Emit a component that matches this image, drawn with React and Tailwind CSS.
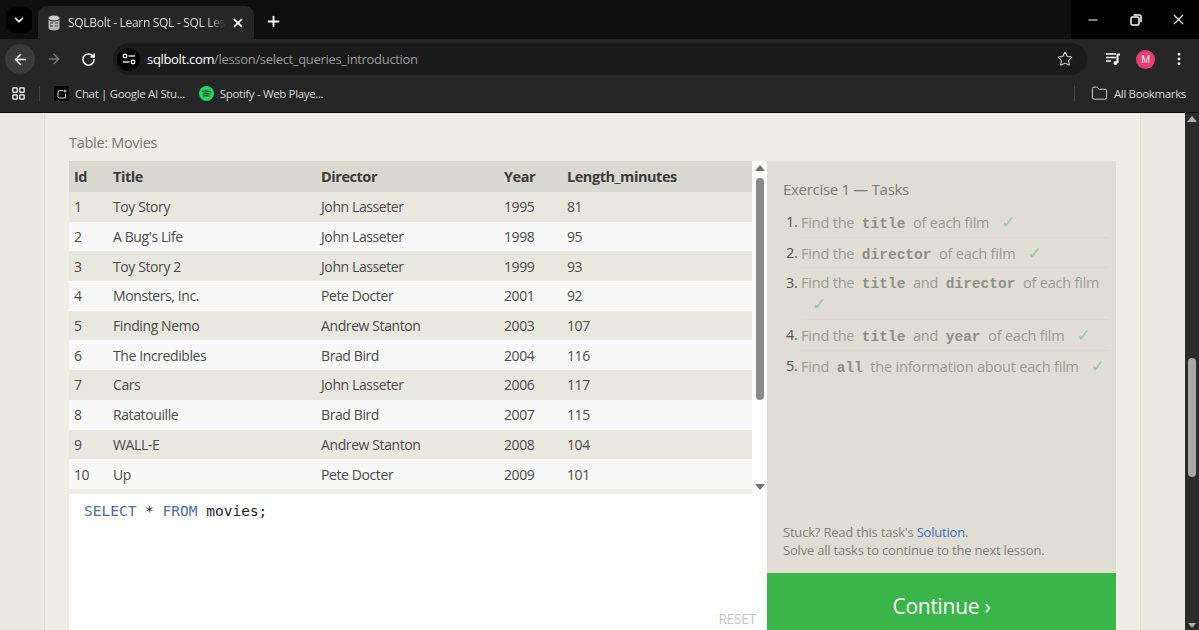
import React from "react";
import { ChevronDown, X, Plus, ArrowLeft, ArrowRight, RotateCw, Star, MoreVertical, Minus, Folder, LayoutGrid } from "lucide-react";

const rows = [
  ["1", "Toy Story", "John Lasseter", "1995", "81"],
  ["2", "A Bug's Life", "John Lasseter", "1998", "95"],
  ["3", "Toy Story 2", "John Lasseter", "1999", "93"],
  ["4", "Monsters, Inc.", "Pete Docter", "2001", "92"],
  ["5", "Finding Nemo", "Andrew Stanton", "2003", "107"],
  ["6", "The Incredibles", "Brad Bird", "2004", "116"],
  ["7", "Cars", "John Lasseter", "2006", "117"],
  ["8", "Ratatouille", "Brad Bird", "2007", "115"],
  ["9", "WALL-E", "Andrew Stanton", "2008", "104"],
  ["10", "Up", "Pete Docter", "2009", "101"],
];

function Code({ children }) {
  return <code className="font-['Liberation_Mono',monospace] font-bold text-[14.5px] tracking-normal text-[#8f8f89] mx-[4px]">{children}</code>;
}
function Check() {
  return <span className="text-[#9cc79c] ml-[12px] font-['DejaVu_Sans',sans-serif] text-[17px] leading-[20px]">✓</span>;
}
function Task({ n, children, last, h = "h-[25.5px]" }) {
  return (
    <div className={`flex leading-[20px] ${last ? "" : "mb-[5px]"}`}>
      <span className="w-[15px] ml-[3px] text-[#555] shrink-0 whitespace-nowrap">{n}.</span>
      <div className={`flex-1 text-[#9a9a94] whitespace-nowrap tracking-[-0.2px] ${h} ${last ? "" : "border-b border-[#dad8ce]"}`}>{children}</div>
    </div>
  );
}

function Row({ r, odd }) {
  return (
    <div className={`flex items-center h-[29.7px] text-[14px] tracking-[-0.4px] text-[#4a4a4a] ${odd ? "bg-[#e9e8df]" : "bg-[#f8f8f8]"}`}>
      <span className="w-[44px] pl-[5px]">{r[0]}</span>
      <span className="w-[208px]">{r[1]}</span>
      <span className="w-[183px]">{r[2]}</span>
      <span className="w-[63px]">{r[3]}</span>
      <span>{r[4]}</span>
    </div>
  );
}

export default function App() {
  return (
    <div className="h-[630px] w-[1199px] overflow-hidden flex flex-col font-['Open_Sans',sans-serif] tracking-[-0.3px] bg-[#e8e4e0]">
      {/* tab strip */}
      <div className="h-[39px] bg-[#0f0f0f] flex items-end shrink-0 relative">
        <div className="w-[26px] h-[26px] ml-[6px] mb-[6px] rounded-[8px] bg-black flex items-center justify-center">
          <ChevronDown size={14} strokeWidth={3} className="text-white" />
        </div>
        <div className="ml-[6px] w-[216px] h-[33px] rounded-t-[9px] bg-[#262626] flex items-center pl-[9px] pr-[9px]">
          <svg width="14" height="16" viewBox="0 0 14 16" className="shrink-0">
            <ellipse cx="7" cy="3" rx="5.5" ry="2.5" fill="#c9c9c9" />
            <path d="M1.5 4v9c0 1.5 2.5 2.5 5.5 2.5s5.5-1 5.5-2.5V4c0 1.5-2.5 2.5-5.5 2.5S1.5 5.500 1.500 4z" fill="#b5b5b5" />
            <path d="M3 8h3M3 11h3" stroke="#333" strokeWidth="1.200" />
            <path d="M8 8h3M8 11h3" stroke="#555" strokeWidth="1.200" />
          </svg>
          <span className="ml-[7px] text-[12px] tracking-[-0.3px] text-[#dcdcdc] whitespace-nowrap overflow-hidden w-[159px] [mask-image:linear-gradient(to_right,black_88%,transparent)]">SQLBolt - Learn SQL - SQL Lesson</span>
          <X size={14} strokeWidth={3} className="text-white ml-[5px]" />
        </div>
        <Plus size={17} strokeWidth={2.5} className="text-white ml-[11px] mb-[9px]" />
        <div className="ml-auto h-[39px] w-[128px] bg-black flex items-center text-white">
          <div className="w-[43px] flex justify-center"><Minus size={14} /></div>
          <div className="w-[43px] flex justify-center">
            <svg width="12" height="12" viewBox="0 0 12 12" fill="none" stroke="white" strokeWidth="1.500"><rect x="1" y="3" width="8" height="8" rx="1.500" /><path d="M3.500 1H9.500A1.500 1.500 0 0 1 11 2.500V8" /></svg>
          </div>
          <div className="w-[42px] flex justify-center"><X size={17} strokeWidth={1.5} /></div>
        </div>
      </div>
      {/* toolbar */}
      <div className="h-[38px] bg-[#262626] flex items-center shrink-0 pt-[2px]">
        <div className="w-[30px] h-[30px] ml-[5px] rounded-full bg-[#3a3a3a] flex items-center justify-center">
          <ArrowLeft size={17} strokeWidth={2.2} className="text-white" />
        </div>
        <ArrowRight size={16} className="text-[#777] ml-[11px]" />
        <RotateCw size={15} strokeWidth={2.4} className="text-white ml-[19px]" />
        <div className="ml-[17px] w-[974px] h-[32px] rounded-full bg-[#1b1b1b] flex items-center pl-[4px] pr-[14px]">
          <div className="w-[23px] h-[23px] rounded-full bg-black flex items-center justify-center">
            <svg width="14" height="12" viewBox="0 0 14 12" fill="none" stroke="white" strokeWidth="1.300">
              <circle cx="3" cy="3" r="1.800" /><path d="M6.500 3H13" />
              <circle cx="11" cy="9" r="1.800" /><path d="M1 9H7.500" />
            </svg>
          </div>
          <span className="ml-[7px] mt-[1px] text-[13px] tracking-[-0.32px] text-white">sqlbolt.com<span className="text-[#9a9a9a]">/lesson/select_queries_introduction</span></span>
          <Star size={16} strokeWidth={1.6} className="text-[#d5d5d5] ml-auto" />
        </div>
        <svg width="16" height="14" viewBox="0 0 16 14" className="ml-[18px] shrink-0" fill="none" stroke="white" strokeWidth="1.500">
          <path d="M1 2h10M1 5.500h10M1 9h5" />
          <path d="M12.500 2v9" strokeWidth="2" />
          <circle cx="10.500" cy="11" r="2" fill="white" stroke="none" />
          <path d="M12.500 2.500H15" strokeWidth="2" />
        </svg>
        <div className="ml-[15px] w-[19px] h-[19px] rounded-full bg-[#e83e75] flex items-center justify-center text-white text-[10px]">M</div>
        <MoreVertical size={16} strokeWidth={2.4} className="text-[#e5e5e5] ml-[16px]" />
      </div>
      {/* bookmarks */}
      <div className="h-[36px] bg-[#262626] flex items-center shrink-0 text-[11.5px] tracking-[-0.35px] text-[#d8d8d8] border-b border-[#0d0d0d] pb-[2px]">
        <LayoutGrid size={15} strokeWidth={2} className="text-white ml-[11px]" />
        <div className="w-px h-[15px] bg-[#444] ml-[13px]" />
        <div className="w-[15px] h-[15px] bg-black ml-[14px] flex items-center justify-center">
          <svg width="10" height="10" viewBox="0 0 10 10" fill="none" stroke="#ddd" strokeWidth="1"><path d="M6 1.500H2.500A1.500 1.500 0 0 0 1 3v4.500A1.500 1.500 0 0 0 2.500 9H7a1.500 1.500 0 0 0 1.500-1.500V5" /><path d="M8 .5v3M6.500 2h3" /></svg>
        </div>
        <span className="ml-[6px]">Chat | Google AI Stu...</span>
        <svg width="15" height="15" viewBox="0 0 15 15" className="ml-[14px]"><circle cx="7.500" cy="7.500" r="7.500" fill="#1ed760" /><path d="M3.500 5.300c2.500-.7 5.500-.5 8 .8M4 7.700c2-.6 4.500-.4 6.700.7M4.400 9.900c1.800-.4 3.800-.3 5.500.6" stroke="#16301f" strokeWidth="1.100" strokeLinecap="round" fill="none" /></svg>
        <span className="ml-[6px]">Spotify - Web Playe...</span>
        <div className="w-px h-[15px] bg-[#444] ml-auto" />
        <Folder size={17} strokeWidth={1.4} className="text-[#cfcfcf] ml-[16px]" />
        <span className="ml-[6px] mr-[13px]">All Bookmarks</span>
      </div>

      {/* page */}
      <div className="flex-1 min-h-0 flex overflow-hidden">
        <div className="flex-1 min-w-0 flex bg-[#ebe7e3] pl-[44px] pr-[44px]">
          <div className="w-[1097px] bg-[#f0ede4] border-l border-r border-[#e2ded6] pl-[24px] pr-[24px] pt-[21px] flex flex-col">
            <div className="text-[14.5px] text-[#777] leading-[18px] h-[27px]">Table: Movies</div>
            <div className="flex flex-1 min-h-0">
              {/* left column */}
              <div className="w-[698px] flex flex-col">
                <div className="h-[333px] flex bg-[#f0ede4] shrink-0">
                  <div className="w-[683px]">
                    <div className="flex items-center h-[31px] bg-[#d9d9cf] text-[14.5px] tracking-[-0.45px] font-bold text-[#3d3d3d]">
                      <span className="w-[44px] pl-[5px]">Id</span>
                      <span className="w-[208px]">Title</span>
                      <span className="w-[183px]">Director</span>
                      <span className="w-[63px]">Year</span>
                      <span>Length_minutes</span>
                    </div>
                    {rows.map((r, i) => <Row key={r[0]} r={r} odd={i % 2 === 0} />)}
                  </div>
                  <div className="w-[15px] bg-white flex flex-col items-center pt-[4px] pb-[4px]">
                    <div className="w-0 h-0 border-l-[5px] border-r-[5px] border-b-[6px] border-l-transparent border-r-transparent border-b-[#6f6f6f]" />
                    <div className="w-[8px] h-[222px] mt-[7px] rounded-full bg-[#8a8a8a]" />
                    <div className="w-0 h-0 mt-auto border-l-[5px] border-r-[5px] border-t-[6px] border-l-transparent border-r-transparent border-t-[#6f6f6f]" />
                  </div>
                </div>
                <div className="flex-1 bg-white relative pl-[15px] pt-[7px] font-['DejaVu_Sans_Mono',monospace] text-[14.5px] leading-[20px] tracking-normal text-[#222]">
                  <span className="text-[#4a6ea5]">SELECT</span> * <span className="text-[#4a6ea5]">FROM</span> movies;
                  <span className="absolute right-[11px] bottom-[1px] font-['Open_Sans',sans-serif] text-[14px] tracking-[-0.4px] text-[#c4c4c4]">RESET</span>
                </div>
              </div>
              {/* right column */}
              <div className="w-[349px] flex flex-col">
                <div className="h-[412px] bg-[#e0ded4] pl-[16px] pr-[7px] pt-[18px] flex flex-col text-[14.5px] shrink-0">
                  <div className="text-[15px] text-[#777c80] leading-[20px] mb-[13px]">Exercise 1 — Tasks</div>
                  <Task n={1}>Find the <Code>title</Code> of each film<Check /></Task>
                  <Task n={2}>Find the <Code>director</Code> of each film<Check /></Task>
                  <Task n={3} h="h-[47px]">Find the <Code>title</Code> and <Code>director</Code> of each film<br /><span className="ml-[-1px]"><Check /></span></Task>
                  <Task n={4}>Find the <Code>title</Code> and <Code>year</Code> of each film<Check /></Task>
                  <Task n={5} last>Find <Code>all</Code> the information about each film<Check /></Task>
                  <div className="mt-auto pb-[14px] text-[13px] leading-[18px] tracking-[-0.2px] text-[#7f7f7a]">
                    Stuck? Read this task's <span className="text-[#3c6cc0]">Solution</span>.<br />
                    Solve all tasks to continue to the next lesson.
                  </div>
                </div>
                <div className="flex-1 bg-[#3ab54a] flex items-center justify-center text-white text-[21px] pt-[10px]">Continue ›</div>
              </div>
            </div>
          </div>
        </div>
        {/* page scrollbar */}
        <div className="w-[14px] bg-[#2b2b2b] flex flex-col items-center pt-[3px] shrink-0">
          <div className="w-0 h-0 border-l-[5px] border-r-[5px] border-b-[6px] border-l-transparent border-r-transparent border-b-[#b0b0b0]" />
          <div className="w-[8px] h-[119px] mt-[236px] rounded-full bg-[#a8a8a8]" />
          <div className="w-0 h-0 mt-auto mb-[2px] border-l-[4px] border-r-[4px] border-t-[5px] border-l-transparent border-r-transparent border-t-[#b0b0b0]" />
        </div>
      </div>
    </div>
  );
}
